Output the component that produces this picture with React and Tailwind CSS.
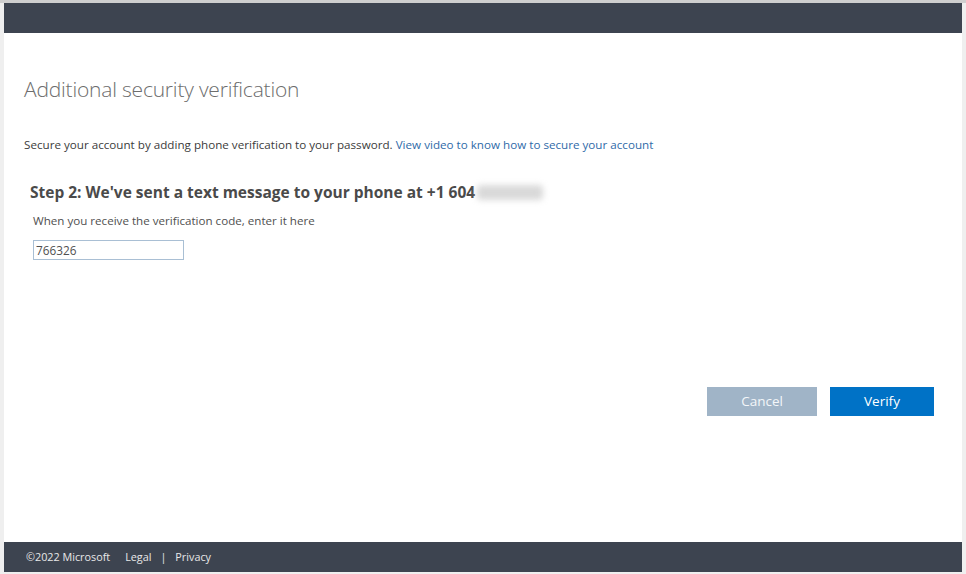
export default function App() {
  return (
    <div
      className="w-full h-[574px] bg-[#efefef] border-t-[3px] border-[#cfcfcf] pl-[4px] pr-[4px] pb-[2px] flex flex-col"
      style={{ fontFamily: '"Open Sans", "Noto Sans", sans-serif' }}
    >
      <div className="h-[30px] bg-[#3d4450] shrink-0" />

      <div className="flex-1 bg-white px-[20px] pt-[42px] flex flex-col">
        <h1 className="text-[21px] font-light text-[#6d6d6d] leading-[28px] tracking-[-0.2px]">
          Additional security verification
        </h1>

        <p className="mt-[34px] text-[11.65px] text-[#3b3b3b] leading-[16px]">
          Secure your account by adding phone verification to your password.{" "}
          <a href="#" className="text-[#2f6aa8]">
            View video to know how to secure your account
          </a>
        </p>

        <div className="pl-[6px] mt-[29px]">
          <h2 className="flex items-center text-[15.5px] font-bold text-[#4a4a4a] leading-[20px]">
            Step 2: We've sent a text message to your phone at +1 604
            <span className="ml-[2px] inline-block w-[66px] h-[15px] bg-[#d9d9d9] blur-[3px] rounded" />
          </h2>

          <p className="pl-[3px] mt-[11px] text-[11.6px] text-[#505050] leading-[16px]">
            When you receive the verification code, enter it here
          </p>

          <div className="pl-[3px] mt-[8px]">
            <input
              type="text"
              defaultValue="766326"
              className="w-[151px] h-[20px] border border-[#a9bfd4] px-[2px] text-[11.8px] text-[#505050] outline-none"
            />
          </div>
        </div>

        <div className="mt-[126px] flex justify-end gap-[13px] pr-[8px]">
          <button className="w-[110px] h-[29px] bg-[#a0b4c7] text-[#f3f6f9] text-[13.5px]">
            Cancel
          </button>
          <button className="w-[104px] h-[29px] bg-[#0072c6] text-white text-[13.5px]">
            Verify
          </button>
        </div>
      </div>

      <div className="h-[30px] bg-[#3d4450] shrink-0 flex items-center pl-[22px] text-[10.8px] text-[#e8e8e8]">
        <span>©2022 Microsoft</span>
        <a href="#" className="ml-[15px]">
          Legal
        </a>
        <span className="mx-[9px]">|</span>
        <a href="#">Privacy</a>
      </div>
    </div>
  );
}
